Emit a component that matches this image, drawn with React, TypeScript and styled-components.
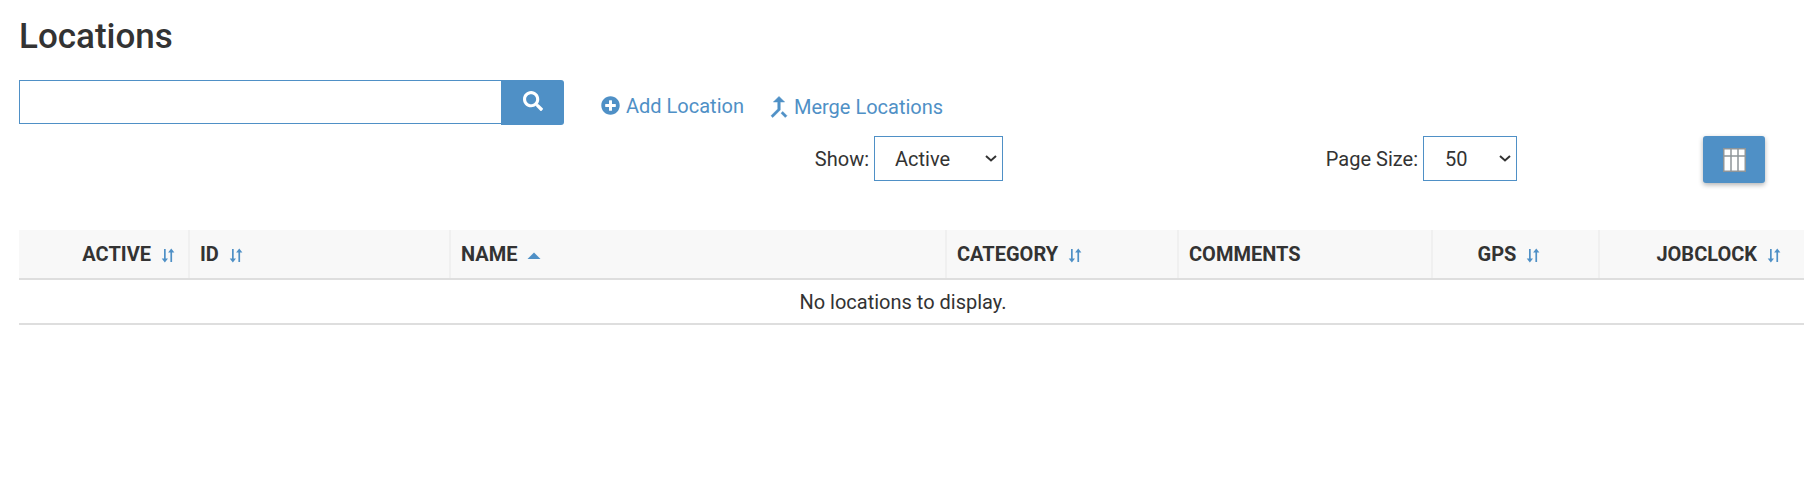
import { createGlobalStyle, styled } from "styled-components";
import { FaPlusCircle, FaSearch } from "react-icons/fa";

const BLUE = "#4f90c6";
const TEXT = "#333333";

const chevron =
  "url(\"data:image/svg+xml,%3csvg xmlns='http://www.w3.org/2000/svg' viewBox='0 0 12 7'%3e%3cpath d='M1 1l5 4.500L11 1' fill='none' stroke='%23333' stroke-width='2'/%3e%3c/svg%3e\")";

const GlobalStyle = createGlobalStyle`
  html, body {
    margin: 0;
    background: #fff;
    color: ${TEXT};
    font-family: Roboto, "Liberation Sans", sans-serif;
    font-size: 20px;
    overflow: hidden;
  }
`;

const Page = styled.div`
  padding: 16px 0 0 19px;
`;

const Title = styled.h1`
  margin: 0;
  font-size: 35px;
  font-weight: 500;
  line-height: 42px;
`;

const TopRow = styled.div`
  display: flex;
  align-items: center;
  margin-top: 22px;
`;

const SearchBox = styled.div`
  display: flex;
  width: 545px;
`;

const SearchInput = styled.input`
  flex: 1;
  min-width: 0;
  height: 44px;
  box-sizing: border-box;
  border: 1px solid ${BLUE};
  border-right: 0;
  outline: none;
  background: #fff;
`;

const SearchButton = styled.button`
  width: 63px;
  height: 45px;
  border: 0;
  border-radius: 0 3px 3px 0;
  background: ${BLUE};
  color: #fff;
  font-size: 20px;
  display: flex;
  align-items: center;
  justify-content: center;
  padding: 0 0 4px;
`;

const ActionLink = styled.a<{ $gap: number; $left: number; $top: number }>`
  display: inline-flex;
  align-items: center;
  gap: ${(p) => p.$gap}px;
  margin-left: ${(p) => p.$left}px;
  padding-top: ${(p) => p.$top}px;
  color: ${BLUE};
  font-size: 20px;
  line-height: 28px;
  text-decoration: none;
`;

const AddIcon = styled(FaPlusCircle)`
  margin-top: -2px;
`;

const FilterRow = styled.div`
  display: flex;
  align-items: flex-start;
  margin-top: 11px;
  padding-left: 795px;
`;

const Field = styled.label<{ $width: number }>`
  display: flex;
  align-items: center;
  justify-content: flex-end;
  gap: 5px;
  width: ${(p) => p.$width}px;
  font-size: 20px;
`;

const Select = styled.select<{ $width: number; $pad: number }>`
  appearance: none;
  flex-shrink: 0;
  width: ${(p) => p.$width}px;
  height: 45px;
  box-sizing: border-box;
  padding: 0 0 0 ${(p) => p.$pad}px;
  border: 1px solid ${BLUE};
  border-radius: 0;
  outline: none;
  background: #fff ${chevron} no-repeat right 5px center / 12px 7px;
  color: ${TEXT};
  font-family: inherit;
  font-size: 20px;
`;

const ColumnsButton = styled.button`
  width: 62px;
  height: 47px;
  margin-left: 186px;
  padding: 0;
  border: 0;
  border-radius: 3px;
  background: ${BLUE};
  box-shadow: 0 2px 5px rgba(0, 0, 0, 0.3);
  display: flex;
  align-items: center;
  justify-content: center;
`;

const Table = styled.table`
  width: 1785px;
  margin-top: 47px;
  border-collapse: collapse;
  table-layout: fixed;
`;

const HeadCell = styled.th<{ $align?: string; $right?: number }>`
  height: 49px;
  box-sizing: border-box;
  padding: 0 ${(p) => p.$right ?? 11}px 0 10px;
  background: #f8f8f8;
  border-left: 2px solid #f0f0f0;
  border-bottom: 2px solid #dedede;
  color: ${TEXT};
  font-size: 20px;
  font-weight: 700;
  text-align: ${(p) => p.$align || "left"};
  text-transform: uppercase;
  white-space: nowrap;

  &:first-child {
    border-left: 0;
  }
`;

const EmptyCell = styled.td`
  height: 45px;
  box-sizing: border-box;
  padding: 0 17px 0 0;
  border-bottom: 2px solid #dedede;
  font-size: 20px;
  text-align: center;
`;

const SortMark = styled.svg`
  margin-left: 10px;
  vertical-align: -2px;
`;

const SortIcon = () => (
  <SortMark width="14" height="15" viewBox="0 0 14 15" fill={BLUE}>
    <path d="M3 1h1.700v9.500h2.300L3.850 14.500.7 10.500H3z" />
    <path d="M9.400 14h1.700V4.500h2.300L10.250.5 7.100 4.500h2.300z" />
  </SortMark>
);

const SortedIcon = () => (
  <SortMark width="14" height="15" viewBox="0 0 14 15" fill={BLUE}>
    <path d="M0.500 11L7 4.500l6.500 6.500z" />
  </SortMark>
);

const MergeIcon = () => (
  <svg width="30" height="30" viewBox="0 0 24 24" fill={BLUE} stroke={BLUE} strokeWidth="0.4">
    <path d="M17 20.410L18.410 19 15 15.590 13.590 17 17 20.410zM7.500 8H11v5.590L5.590 19 7 20.410l6-6V8h3.500L12 3.500 7.500 8z" />
  </svg>
);

const ColumnsIcon = () => (
  <svg width="23" height="24" viewBox="0 0 23 24">
    <rect x="0.750" y="0.750" width="21.500" height="22.500" fill="#fff" stroke="#8e9599" strokeWidth="1.500" />
    <path d="M8 0v24M15 0v24M0 8h23" stroke="#8e9599" strokeWidth="1.500" />
  </svg>
);

const columns = [
  { label: "Active", width: 170, align: "right", sort: true, right: 13 },
  { label: "ID", width: 261, sort: true },
  { label: "Name", width: 496, sorted: true },
  { label: "Category", width: 232, sort: true },
  { label: "Comments", width: 254 },
  { label: "GPS", width: 167, align: "center", sort: true, right: 23 },
  { label: "Jobclock", width: 205, align: "right", sort: true, right: 23 },
];

export default function App() {
  return (
    <Page>
      <GlobalStyle />
      <Title>Locations</Title>
      <TopRow>
        <SearchBox>
          <SearchInput type="text" />
          <SearchButton type="button" aria-label="Search">
            <FaSearch />
          </SearchButton>
        </SearchBox>
        <ActionLink $gap={6} $left={37} $top={7} href="#">
          <AddIcon size={19} />
          Add Location
        </ActionLink>
        <ActionLink $gap={0} $left={20} $top={8} href="#">
          <MergeIcon />
          Merge Locations
        </ActionLink>
      </TopRow>
      <FilterRow>
        <Field $width={189}>
          Show:
          <Select $width={129} $pad={20} defaultValue="Active">
            <option>Active</option>
            <option>Inactive</option>
            <option>All</option>
          </Select>
        </Field>
        <Field $width={514}>
          Page Size:
          <Select $width={94} $pad={21} defaultValue="50">
            <option>25</option>
            <option>50</option>
            <option>100</option>
          </Select>
        </Field>
        <ColumnsButton type="button" aria-label="Columns">
          <ColumnsIcon />
        </ColumnsButton>
      </FilterRow>
      <Table>
        <colgroup>
          {columns.map((c) => (
            <col key={c.label} width={c.width} />
          ))}
        </colgroup>
        <thead>
          <tr>
            {columns.map((c) => (
              <HeadCell key={c.label} $align={c.align} $right={c.right}>
                {c.label}
                {c.sort && <SortIcon />}
                {c.sorted && <SortedIcon />}
              </HeadCell>
            ))}
          </tr>
        </thead>
        <tbody>
          <tr>
            <EmptyCell colSpan={7}>No locations to display.</EmptyCell>
          </tr>
        </tbody>
      </Table>
    </Page>
  );
}
